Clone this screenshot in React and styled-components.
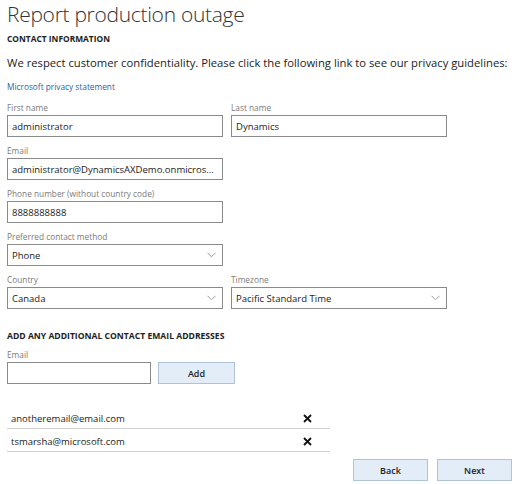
import React from "react";
import styled, { createGlobalStyle } from "styled-components";

const Global = createGlobalStyle`
  html, body { margin: 0; padding: 0; background: #fff; }
  body { font-family: "Open Sans", "Noto Sans", sans-serif; color: #222; }
  * { box-sizing: border-box; }
`;

const Page = styled.div`
  width: 517px;
  padding: 0 5px 0 7px;
  display: flex;
  flex-direction: column;
`;

const Title = styled.h1`
  margin: 0;
  font-weight: 300;
  font-size: 21px;
  line-height: 28px;
  color: #333;
  letter-spacing: -0.3px;
`;

const SectionHeading = styled.h2`
  margin: ${(p) => p.$mt || 0}px 0 0 0;
  font-size: ${(p) => p.$size || 8.4}px;
  font-weight: 700;
  line-height: 14px;
  color: #222;
`;

const Paragraph = styled.p`
  margin: 10px 0 0 0;
  font-size: 11.25px;
  line-height: 14px;
  color: #222;
`;

const Link = styled.a`
  margin-top: 10px;
  font-size: 8.3px;
  line-height: 14px;
  color: #2e5ea8;
  text-decoration: none;
  align-self: flex-start;
`;

const FormGrid = styled.div`
  margin-top: 7px;
  display: grid;
  grid-template-columns: 216px 216px;
  column-gap: 8px;
  row-gap: 7px;
`;

const Field = styled.div`
  display: flex;
  flex-direction: column;
  grid-column: ${(p) => p.$col || "auto"};
  width: ${(p) => (p.$w ? p.$w + "px" : "auto")};
`;

const Label = styled.label`
  font-size: 8.3px;
  line-height: 14px;
  height: 14px;
  color: #7a7a7a;
`;

const Input = styled.div`
  height: 22px;
  border: 1px solid #8a8a8a;
  padding: 0 6px 0 4px;
  display: flex;
  align-items: center;
  justify-content: space-between;
  font-size: 9.5px;
  color: #222;
  white-space: nowrap;
  overflow: hidden;
  background: #fff;
`;

const Chevron = () => (
  <svg width="9" height="6" viewBox="0 0 9 6" style={{ flex: "none" }}>
    <path d="M0.5 0.8 L4.5 4.8 L8.5 0.8" fill="none" stroke="#9a9a9a" strokeWidth="1" />
  </svg>
);

const AddRow = styled.div`
  margin-top: 5px;
  display: flex;
  gap: 7px;
  align-items: flex-end;
`;

const Button = styled.button`
  width: ${(p) => p.$w || 75}px;
  height: 22px;
  background: #e3edf8;
  border: 1px solid #b0c2d8;
  font-family: inherit;
  font-size: 9px;
  font-weight: 600;
  color: #222;
  padding: 0;
`;

const List = styled.div`
  margin-top: 22px;
  width: 323px;
  display: flex;
  flex-direction: column;
`;

const ListRow = styled.div`
  height: 23px;
  border-bottom: 1px solid #cfcfcf;
  display: flex;
  align-items: center;
  justify-content: space-between;
  padding: 3px 18px 0 4px;
  font-size: 9.5px;
  color: #222;
`;

const Close = () => (
  <svg width="9" height="9" viewBox="0 0 9 9">
    <path d="M1 1 L8 8 M8 1 L1 8" stroke="#111" strokeWidth="1.8" />
  </svg>
);

const Footer = styled.div`
  margin-top: 7px;
  display: flex;
  justify-content: flex-end;
  gap: 9px;
`;

export default function App() {
  return (
    <Page>
      <Global />
      <Title>Report production outage</Title>
      <SectionHeading $mt={4}>CONTACT INFORMATION</SectionHeading>
      <Paragraph>
        We respect customer confidentiality. Please click the following link to see our privacy guidelines:
      </Paragraph>
      <Link href="#">Microsoft privacy statement</Link>
      <FormGrid>
        <Field>
          <Label>First name</Label>
          <Input>administrator</Input>
        </Field>
        <Field>
          <Label>Last name</Label>
          <Input>Dynamics</Input>
        </Field>
        <Field $col="1">
          <Label>Email</Label>
          <Input>administrator@DynamicsAXDemo.onmicros...</Input>
        </Field>
        <Field $col="1">
          <Label>Phone number (without country code)</Label>
          <Input>8888888888</Input>
        </Field>
        <Field $col="1">
          <Label>Preferred contact method</Label>
          <Input>
            Phone
            <Chevron />
          </Input>
        </Field>
        <Field $col="1">
          <Label>Country</Label>
          <Input>
            Canada
            <Chevron />
          </Input>
        </Field>
        <Field>
          <Label>Timezone</Label>
          <Input>
            Pacific Standard Time
            <Chevron />
          </Input>
        </Field>
      </FormGrid>
      <SectionHeading $mt={20} $size={8.6}>ADD ANY ADDITIONAL CONTACT EMAIL ADDRESSES</SectionHeading>
      <AddRow>
        <Field $w={144}>
          <Label>Email</Label>
          <Input />
        </Field>
        <Button $w={77}>Add</Button>
      </AddRow>
      <List>
        <ListRow>
          anotheremail@email.com
          <Close />
        </ListRow>
        <ListRow>
          tsmarsha@microsoft.com
          <Close />
        </ListRow>
      </List>
      <Footer>
        <Button>Back</Button>
        <Button>Next</Button>
      </Footer>
    </Page>
  );
}
